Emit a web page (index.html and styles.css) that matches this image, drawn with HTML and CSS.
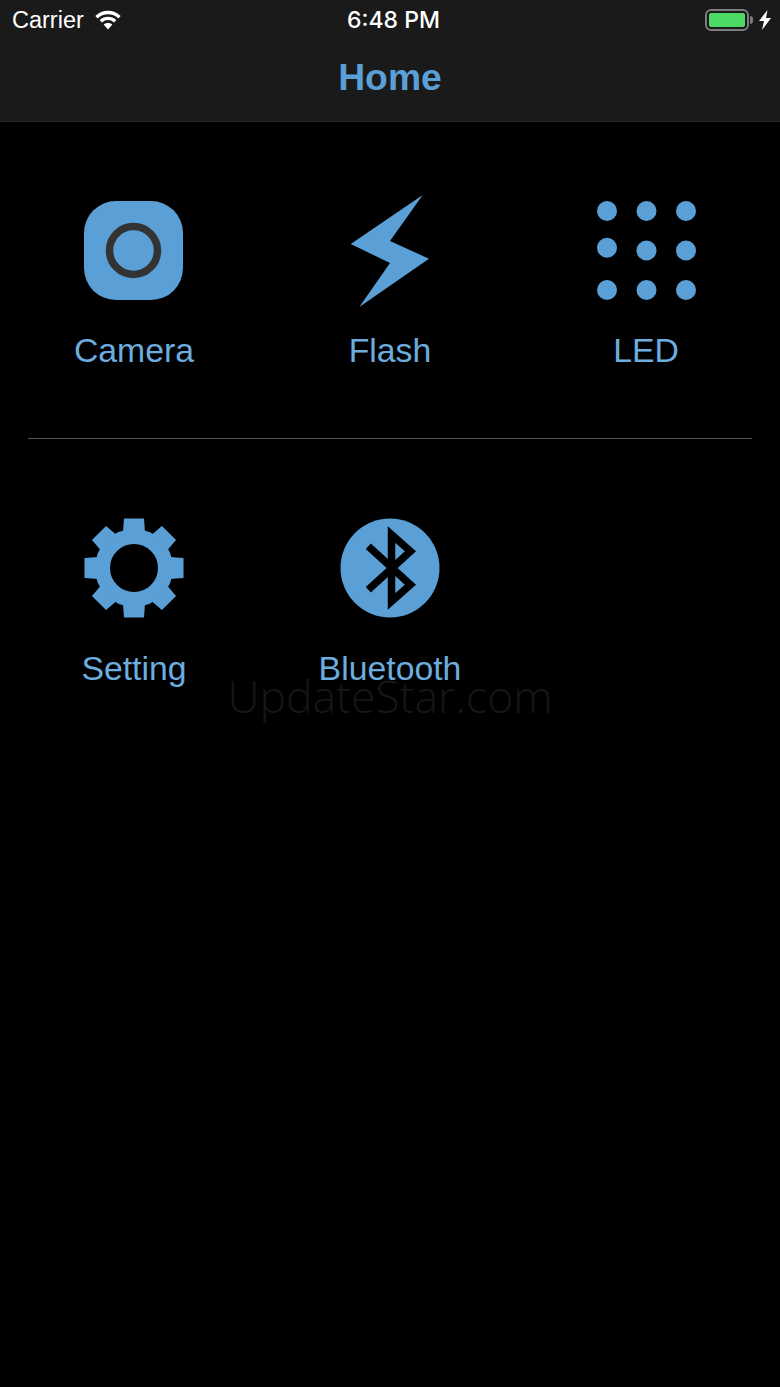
FILE: index.html
```html
<!DOCTYPE html>
<html>
<head lang="en">
    <meta charset="UTF-8">
    <title>Home</title>
    <link rel="stylesheet" href="styles.css">
</head>
<body>
<div id="container">
    <div id="header">
        <div id="status">
            <div class="status-left">
                <span class="carrier">Carrier</span>
                <svg class="wifi" width="26" height="20" viewBox="0 0 26 20">
                    <path d="M1.5 7.2C8 1 18 1 24.5 7.2" />
                    <path d="M5.8 11.2C10 7.4 16 7.4 20.2 11.2" />
                    <path class="wifi-tip" d="M13 19.5L8.6 14.6C11 12.6 15 12.6 17.4 14.6Z" />
                </svg>
            </div>
            <div class="time">6:48 PM</div>
            <div class="status-right">
                <div class="battery"><div class="battery-level"></div></div>
                <div class="battery-nub"></div>
                <svg class="charge" width="12" height="20" viewBox="0 0 12 20">
                    <path d="M8.5 0L0 11H5L3 20L12 8H7Z" />
                </svg>
            </div>
        </div>
        <div id="title">Home</div>
    </div>

    <div class="row first">
        <div class="cell">
            <div class="icon">
                <svg width="100" height="100" viewBox="0 0 100 100">
                    <rect class="blue" x="0" y="0" width="99" height="99" rx="32" />
                    <circle class="lens" cx="49.5" cy="49.5" r="24" />
                </svg>
            </div>
            <div class="label">Camera</div>
        </div>
        <div class="cell">
            <div class="icon">
                <svg width="100" height="112" viewBox="0 0 100 112">
                    <path class="blue" d="M82.7 0L50 46L89 63.7L19.3 112L50 68L10.7 49Z" />
                </svg>
            </div>
            <div class="label">Flash</div>
        </div>
        <div class="cell">
            <div class="icon">
                <svg width="100" height="100" viewBox="0 0 100 100">
                    <circle class="blue" cx="11" cy="10" r="10" />
                    <circle class="blue" cx="50.5" cy="10" r="10" />
                    <circle class="blue" cx="90" cy="10" r="10" />
                    <circle class="blue" cx="11" cy="46.7" r="10" />
                    <circle class="blue" cx="50.5" cy="49.5" r="10" />
                    <circle class="blue" cx="90" cy="49.5" r="10" />
                    <circle class="blue" cx="11" cy="89" r="10" />
                    <circle class="blue" cx="50.5" cy="89" r="10" />
                    <circle class="blue" cx="90" cy="89" r="10" />
                </svg>
            </div>
            <div class="label">LED</div>
        </div>
    </div>

    <div id="line"></div>

    <div class="row">
        <div class="cell">
            <div class="icon">
                <svg width="100" height="100" viewBox="-50 -50 100 100">
                    <circle class="gear-ring" cx="0" cy="0" r="31.5" />
                    <path class="blue" d="M-10 -49.5H10L11 -36H-11Z" />
                    <path class="blue" d="M-10 -49.5H10L11 -36H-11Z" transform="rotate(45)" />
                    <path class="blue" d="M-10 -49.5H10L11 -36H-11Z" transform="rotate(90)" />
                    <path class="blue" d="M-10 -49.5H10L11 -36H-11Z" transform="rotate(135)" />
                    <path class="blue" d="M-10 -49.5H10L11 -36H-11Z" transform="rotate(180)" />
                    <path class="blue" d="M-10 -49.5H10L11 -36H-11Z" transform="rotate(225)" />
                    <path class="blue" d="M-10 -49.5H10L11 -36H-11Z" transform="rotate(270)" />
                    <path class="blue" d="M-10 -49.5H10L11 -36H-11Z" transform="rotate(315)" />
                </svg>
            </div>
            <div class="label">Setting</div>
        </div>
        <div class="cell">
            <div class="icon">
                <svg width="100" height="100" viewBox="-50 -50 100 100">
                    <circle class="blue" cx="0" cy="0" r="49.5" />
                    <path class="rune" d="M-21.7 -21.7L20.4 16.7L1.5 33.5V-33.5L20.4 -16.7L-21.7 21.7" />
                </svg>
            </div>
            <div class="label">Bluetooth</div>
        </div>
    </div>

    <div id="watermark">UpdateStar.com</div>
</div>
</body>
</html>
```

FILE: styles.css
```css
* {
    margin: 0;
    padding: 0;
}

body {
    background: #000;
    font-family: "Liberation Sans", Arial, sans-serif;
}

svg {
    display: block;
}

#container {
    width: 780px;
    height: 1387px;
    position: relative;
    overflow: hidden;
}

#header {
    height: 121px;
    background: #1a1a1a;
    border-bottom: 1px solid #262626;
}

#status {
    height: 40px;
    padding: 0 9px 0 12px;
    display: flex;
    align-items: center;
    color: #fff;
}

.status-left,
.status-right {
    flex: 1;
    display: flex;
    align-items: center;
}

.status-right {
    justify-content: flex-end;
}

.carrier {
    font-size: 23.5px;
}

.wifi {
    margin-left: 11px;
    fill: none;
    stroke: #fff;
    stroke-width: 3.4;
}

.wifi .wifi-tip {
    fill: #fff;
    stroke: none;
}

.time {
    margin-left: 4px;
    font-family: Inter, "Liberation Sans", sans-serif;
    font-size: 23px;
    font-weight: 500;
}

.battery {
    width: 44px;
    height: 22px;
    box-sizing: border-box;
    border: 2px solid #7b7b7b;
    border-radius: 6px;
    padding: 2px;
}

.battery-level {
    height: 100%;
    background: #4cd964;
    border-radius: 2px;
}

.battery-nub {
    width: 3px;
    height: 8px;
    margin-left: 1px;
    background: #7b7b7b;
    border-radius: 0 4px 4px 0;
}

.charge {
    margin-left: 6px;
    fill: #fff;
}

#title {
    text-align: center;
    color: #5a9fd6;
    font-size: 37.3px;
    font-weight: bold;
    line-height: 45px;
    margin-top: 15px;
}

.row {
    display: grid;
    grid-template-columns: repeat(3, 256px);
    padding: 73px 6px 67px;
}

.first {
    padding-bottom: 68px;
}

.first .label {
    margin-top: 23px;
}

.cell {
    display: flex;
    flex-direction: column;
    align-items: center;
}

.icon {
    height: 112px;
    display: flex;
    align-items: center;
}

.label {
    margin-top: 24px;
    line-height: 40px;
    font-size: 33.8px;
    color: #6badde;
}

#line {
    height: 1px;
    margin: 0 28px;
    background: #555;
}

.blue {
    fill: #5a9fd6;
}

.lens {
    fill: none;
    stroke: #333;
    stroke-width: 7.5;
}

.gear-ring {
    fill: none;
    stroke: #5a9fd6;
    stroke-width: 15;
}

.rune {
    fill: none;
    stroke: #000;
    stroke-width: 7.5;
}

#watermark {
    position: absolute;
    left: 0;
    right: 0;
    top: 667px;
    text-align: center;
    font-family: "Open Sans", sans-serif;
    font-size: 44.5px;
    font-weight: 300;
    line-height: 58px;
    color: #161616;
}
```
